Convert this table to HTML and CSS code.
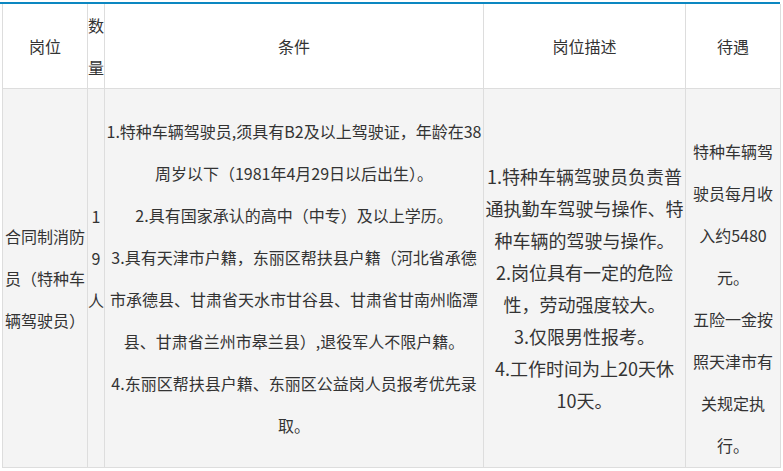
FILE: index.html
```html
<!DOCTYPE html>
<html lang="zh-CN">
<head>
<meta charset="utf-8">
<title>岗位</title>
<link rel="stylesheet" href="styles.css">
</head>
<body>
<div class="wrap">
  <table class="jobs">
    <colgroup>
      <col class="c1">
      <col class="c2">
      <col class="c3">
      <col class="c4">
      <col class="c5">
    </colgroup>
    <thead>
      <tr class="head">
        <th>岗位</th>
        <th class="narrow">数<br>量</th>
        <th>条件</th>
        <th>岗位描述</th>
        <th>待遇</th>
      </tr>
    </thead>
    <tbody>
      <tr class="body">
        <td class="post">合同制消防<br>员（特种车<br>辆驾驶员）</td>
        <td class="count">1<br>9<br>人</td>
        <td class="cond">1.特种车辆驾驶员,须具有B2及以上驾驶证，年龄在38<br>周岁以下（1981年4月29日以后出生）。<br>2.具有国家承认的高中（中专）及以上学历。<br>3.具有天津市户籍，东丽区帮扶县户籍（河北省承德<br>市承德县、甘肃省天水市甘谷县、甘肃省甘南州临潭<br>县、甘肃省兰州市皋兰县）,退役军人不限户籍。<br>4.东丽区帮扶县户籍、东丽区公益岗人员报考优先录<br>取。</td>
        <td class="desc">1.特种车辆驾驶员负责普<br>通执勤车驾驶与操作、特<br>种车辆的驾驶与操作。<br>2.岗位具有一定的危险<br>性，劳动强度较大。<br>3.仅限男性报考。<br>4.工作时间为上20天休<br>10天。</td>
        <td class="pay">特种车辆驾<br>驶员每月收<br>入约5480<br>元。<br>五险一金按<br>照天津市有<br>关规定执<br>行。</td>
      </tr>
    </tbody>
  </table>
</div>
</body>
</html>
```

FILE: styles.css
```css
html, body {
  margin: 0;
  padding: 0;
  background: #ffffff;
}

.wrap {
  margin-top: 2px;
  width: 780px;
  border-top: 2px solid #0c87c1;
}

.jobs {
  margin-left: 2px;
  width: 778px;
  table-layout: fixed;
  border-collapse: collapse;
  font-family: "Noto Sans CJK SC", "Microsoft YaHei", sans-serif;
  font-size: 16px;
  color: #333333;
}

.c1 { width: 85px; }
.c2 { width: 17px; }
.c3 { width: 379px; }
.c4 { width: 202px; }
.c5 { width: 95px; }

.jobs th,
.jobs td {
  border: 1px solid #dddddd;
  padding: 0;
  text-align: center;
  vertical-align: middle;
  line-height: 42px;
  font-weight: normal;
  white-space: nowrap;
}

.jobs thead th {
  border-top: none;
}

.head th {
  height: 83px;
  background: #ffffff;
}

.body {
  height: 379px;
}

.body td {
  background: #f4f4f4;
}

.jobs .post {
  text-align: left;
  padding-left: 2px;
}

.jobs .count {
  padding-bottom: 41px;
}

.jobs .desc {
  font-size: 18px;
  line-height: 32px;
  padding-top: 20px;
}

.jobs .pay {
  padding-top: 40px;
}
```
